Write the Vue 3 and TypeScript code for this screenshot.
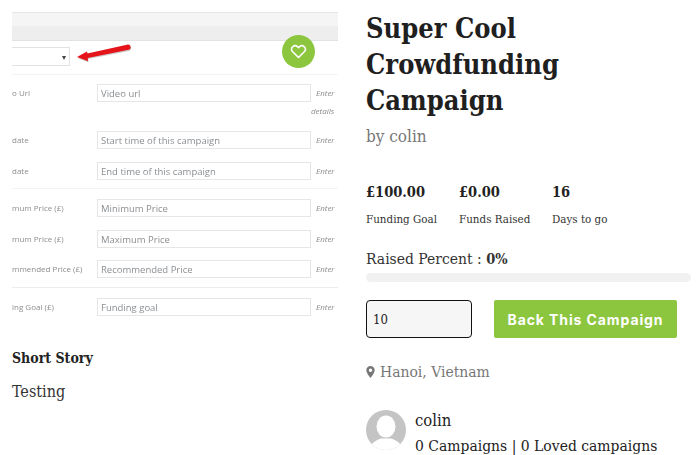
<script setup lang="ts">
interface Row { label: string; placeholder: string; extra?: string; cls: string }
const group1: Row[] = [
  { label: 'o Url', placeholder: 'Video url', extra: 'details', cls: 'tall' },
  { label: 'date', placeholder: 'Start time of this campaign', cls: 'start' },
  { label: 'date', placeholder: 'End time of this campaign', cls: 'end' },
]
const group2: Row[] = [
  { label: 'mum Price (£)', placeholder: 'Minimum Price', cls: 'price' },
  { label: 'mum Price (£)', placeholder: 'Maximum Price', cls: 'price' },
  { label: 'mmended Price (£)', placeholder: 'Recommended Price', cls: 'price' },
]
const stats = [
  { value: '£100.00', label: 'Funding Goal' },
  { value: '£0.00', label: 'Funds Raised' },
  { value: '16', label: 'Days to go' },
]
</script>

<template>
  <div class="page">
    <section class="left">
      <div class="shot">
        <div class="blurred">
          <div class="bar-light"></div>
          <div class="bar-dark"></div>
          <div class="select-row">
            <div class="select"><span class="caret">▾</span></div>
          </div>
          <div class="group g1">
            <div v-for="r in group1" :key="r.placeholder" class="row" :class="r.cls">
              <span class="lab">{{ r.label }}</span>
              <div class="field">{{ r.placeholder }}</div>
              <div class="hint">
                <em>Enter</em>
                <em v-if="r.extra" class="extra">{{ r.extra }}</em>
              </div>
            </div>
          </div>
          <div class="group g2">
            <div v-for="r in group2" :key="r.placeholder" class="row" :class="r.cls">
              <span class="lab">{{ r.label }}</span>
              <div class="field">{{ r.placeholder }}</div>
              <div class="hint"><em>Enter</em></div>
            </div>
          </div>
          <div class="group g3">
            <div class="row price">
              <span class="lab">ing Goal (£)</span>
              <div class="field">Funding goal</div>
              <div class="hint"><em>Enter</em></div>
            </div>
          </div>
        </div>
        <div class="love">
          <svg viewBox="0 0 24 24" width="17" height="17" fill="none" stroke="#fff" stroke-width="2.2" stroke-linejoin="round">
            <path d="M12 20.5 3.8 12.4a5 5 0 0 1 0-7 5 5 0 0 1 7 0L12 6.600l1.200-1.200a5 5 0 0 1 7 0 5 5 0 0 1 0 7Z" />
          </svg>
        </div>
        <svg class="arrow" viewBox="0 0 58 20" width="58" height="20">
          <path d="M0.500 14.500 10 8.600l.4 2L51 1.700c2.600-.5 4 4.400.8 5.300L10.800 15l.2 3.300Z" fill="#cfcfcf" transform="translate(.6 .9)" />
          <path d="M0 14 10 8.600l.4 2L51 1.500c2.600-.5 4 4.400.8 5.300L10.800 15l.2 3.300Z" fill="#e5141a" />
        </svg>
      </div>
      <h3 class="story-h">Short Story</h3>
      <p class="story">Testing</p>
    </section>

    <section class="right">
      <h1 class="title">Super Cool Crowdfunding Campaign</h1>
      <div class="by">by colin</div>
      <div class="stats">
        <div v-for="s in stats" :key="s.label" class="stat">
          <strong>{{ s.value }}</strong>
          <span>{{ s.label }}</span>
        </div>
      </div>
      <div class="percent">Raised Percent : <b>0%</b></div>
      <div class="track"></div>
      <div class="back">
        <input class="amount" type="text" value="10" />
        <button class="cta" type="button">Back This Campaign</button>
      </div>
      <div class="loc">
        <svg viewBox="0 0 12 16" width="9" height="12"><path fill-rule="evenodd" fill="#777" d="M6 0a5.600 5.600 0 0 0-5.600 5.600C.4 9.200 6 16 6 16s5.600-6.800 5.600-10.400A5.600 5.600 0 0 0 6 0Zm0 3.400a2.300 2.300 0 1 1 0 4.600 2.300 2.300 0 0 1 0-4.600Z" /></svg>
        <span>Hanoi, Vietnam</span>
      </div>
      <div class="author">
        <svg class="avatar" viewBox="0 0 40 40" width="40" height="40">
          <defs><clipPath id="av"><circle cx="20" cy="20" r="20" /></clipPath></defs>
          <g clip-path="url(#av)">
            <rect width="40" height="40" fill="#c4c4c4" />
            <ellipse cx="20" cy="16.500" rx="9.500" ry="11" fill="#fff" />
            <path d="M3 42c0-8 7-12 12-13.500h10C30 30 37 34 37 42Z" fill="#fff" />
          </g>
        </svg>
        <div class="who">
          <div class="name">colin</div>
          <div class="counts">0 Campaigns | 0 Loved campaigns</div>
        </div>
      </div>
    </section>
  </div>
</template>

<style>
html, body { margin: 0; padding: 0; background: #fff; }
</style>

<style scoped>
.page {
  width: 700px;
  height: 455px;
  overflow: hidden;
  display: flex;
  gap: 28px;
  padding-left: 12px;
  box-sizing: border-box;
  background: #fff;
  font-family: "DejaVu Serif Condensed", "DejaVu Serif", serif;
  color: #222;
}
.left { width: 326px; flex: none; }
.right { width: 325px; flex: none; padding-top: 11px; }

.shot { position: relative; width: 326px; height: 322px; margin-top: 12px; overflow: hidden; }
.blurred { filter: blur(0.55px); font-family: "Open Sans", sans-serif; color: #8a8a8a; }
.bar-light { height: 14px; background: #f5f5f5; border-top: 1px solid #e6e6e6; box-sizing: border-box; }
.bar-dark { height: 15px; background: #eeeeee; border-bottom: 1px solid #e2e2e2; box-sizing: border-box; }
.select-row { padding-top: 6px; box-sizing: border-box; border-bottom: 1px solid #f3f3f3; height: 34px; }
.select {
  width: 58px; height: 19px; box-sizing: border-box;
  border: 1px solid #e2e2e2; border-left: 0;
  display: flex; align-items: center; justify-content: flex-end;
  padding-right: 3px; color: #444; font-size: 8px;
}
.group { padding-top: 9px; }
.g1 { height: 114px; box-sizing: border-box; border-bottom: 1px solid #f3f3f3; }
.g2 { height: 99px; box-sizing: border-box; border-bottom: 1px solid #ececec; padding-top: 10px; }
.g3 { padding-top: 10px; }
.row { display: flex; align-items: flex-start; height: 17px; margin-bottom: 13.500px; }
.row.tall { height: 38px; margin-bottom: 9px; }
.lab { width: 85px; flex: none; font-size: 8px; line-height: 17px; white-space: nowrap; color: #8d8d8d; }
.field {
  width: 214px; height: 18px; flex: none; box-sizing: border-box;
  border: 1px solid #e6e6e6; padding-left: 3px;
  font-size: 9.500px; line-height: 17px; color: #8b8f93; white-space: nowrap;
}
.hint { margin-left: 5px; font-size: 8px; line-height: 17px; color: #8a8a8a; display: flex; flex-direction: column; }
.extra { margin-left: -5px; margin-top: 1px; }

.love {
  position: absolute; left: 270px; top: 23px;
  width: 33px; height: 33px; border-radius: 50%;
  background: #8cc63f;
  display: flex; align-items: center; justify-content: center;
}
.arrow { position: absolute; left: 65px; top: 31px; }

.story-h { margin: 14px 0 0; font-size: 14px; line-height: 20px; font-weight: 700; color: #222; }
.story { margin: 14px 0 0; font-size: 16px; line-height: 20px; color: #333; }

.title { margin: 0; font-size: 27px; line-height: 36px; font-weight: 700; color: #1f1f1f; width: 240px; }
.by { margin-top: 5px; font-size: 17px; line-height: 24px; color: #777; }

.stats { display: flex; margin-top: 34px; }
.stat { display: flex; flex-direction: column; width: 93px; }
.stat strong { font-size: 14.500px; line-height: 20px; color: #222; }
.stat span { margin-top: 8px; font-size: 11.500px; line-height: 18px; color: #333; }
.percent { margin-top: 20px; font-size: 15.500px; line-height: 22px; color: #333; }
.percent b { font-size: 14.500px; }
.track { margin-top: 3px; height: 9px; border-radius: 5px; background: #f1f1f1; }
.back { display: flex; gap: 22px; margin-top: 18px; }
.amount {
  width: 106px; height: 38px; box-sizing: border-box;
  border: 1.500px solid #111; border-radius: 4px; background: #f6f6f6;
  padding: 0 6px; font: 13px "DejaVu Serif Condensed", "DejaVu Serif", serif; color: #222;
  outline: none;
}
.cta {
  width: 183px; height: 38px; border: 0; border-radius: 2px; background: #8cc63f; color: #fff;
  font: 700 14px Inter, "Open Sans", sans-serif; letter-spacing: .9px; padding: 0;
}
.loc { display: flex; align-items: center; gap: 5px; margin-top: 23px; font-size: 15.500px; line-height: 22px; color: #777; }
.author { display: flex; gap: 9px; margin-top: 26px; }
.avatar { flex: none; margin-top: 1px; }
.who { font-size: 15.500px; color: #222; }
.name { line-height: 24px; font-size: 16.500px; }
.counts { line-height: 26px; white-space: nowrap; }
</style>
